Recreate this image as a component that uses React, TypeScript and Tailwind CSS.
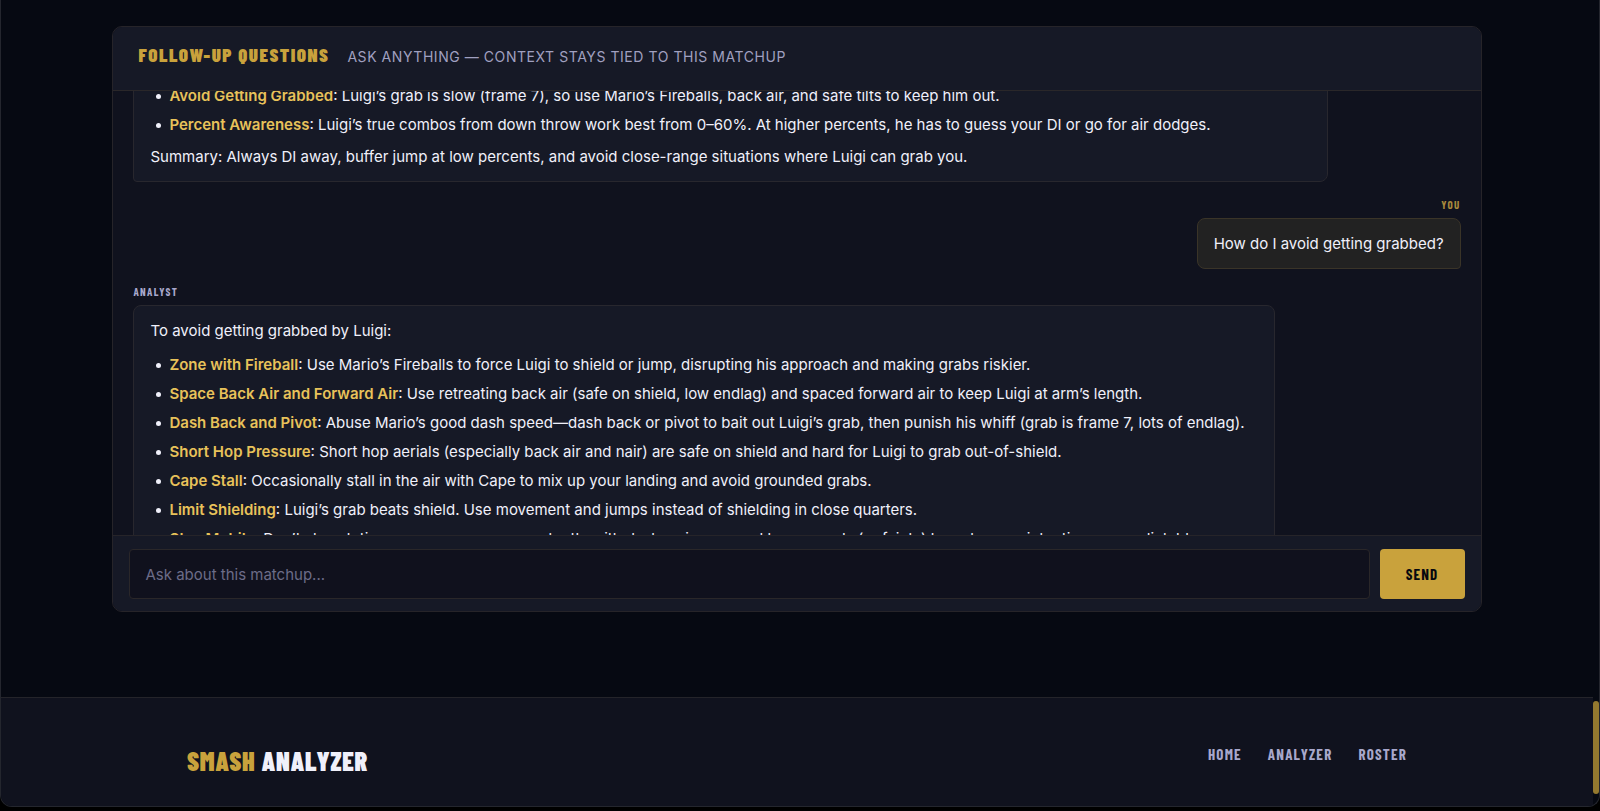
import React, { useLayoutEffect, useRef } from "react";

type Tip = { title: string; text: string };

const earlierTips: Tip[] = [
  { title: "Avoid Getting Grabbed", text: "Luigi’s grab is slow (frame 7), so use Mario’s Fireballs, back air, and safe tilts to keep him out." },
  { title: "Percent Awareness", text: "Luigi’s true combos from down throw work best from 0–60%. At higher percents, he has to guess your DI or go for air dodges." },
];

const grabTips: Tip[] = [
  { title: "Zone with Fireball", text: "Use Mario’s Fireballs to force Luigi to shield or jump, disrupting his approach and making grabs riskier." },
  { title: "Space Back Air and Forward Air", text: "Use retreating back air (safe on shield, low endlag) and spaced forward air to keep Luigi at arm’s length." },
  { title: "Dash Back and Pivot", text: "Abuse Mario’s good dash speed—dash back or pivot to bait out Luigi’s grab, then punish his whiff (grab is frame 7, lots of endlag)." },
  { title: "Short Hop Pressure", text: "Short hop aerials (especially back air and nair) are safe on shield and hard for Luigi to grab out-of-shield." },
  { title: "Cape Stall", text: "Occasionally stall in the air with Cape to mix up your landing and avoid grounded grabs." },
  { title: "Limit Shielding", text: "Luigi’s grab beats shield. Use movement and jumps instead of shielding in close quarters." },
  { title: "Stay Mobile", text: "Don’t stay static—vary your moves constantly with dashes, jumps, and turnarounds (or feints) to make your intentions unpredictable." },
];

const display = "font-['Barlow_Condensed','Roboto_Condensed','Liberation_Sans_Narrow','Liberation_Sans',sans-serif]";

function TipList({ tips }: { tips: Tip[] }) {
  return (
    <ul className="space-y-1 pl-[19px]">
      {tips.map((tip) => (
        <li
          key={tip.title}
          className="relative before:absolute before:top-[11px] before:-left-[13px] before:size-[5px] before:rounded-full before:bg-[#f0f0fa] before:content-['']"
        >
          <strong className="font-semibold text-[#e8c25a]">{tip.title}</strong>: {tip.text}
        </li>
      ))}
    </ul>
  );
}

function Label({ children, className }: { children: React.ReactNode; className: string }) {
  return (
    <div className={`${display} mt-4 mb-[6px] text-[11px] leading-[14px] font-bold tracking-[0.12em] uppercase ${className}`}>
      {children}
    </div>
  );
}

export default function App() {
  const log = useRef<HTMLDivElement>(null);
  useLayoutEffect(() => {
    if (log.current) log.current.scrollTop = 41;
  }, []);

  return (
    <div className="flex h-screen flex-col bg-black pb-1 font-['Inter','Liberation_Sans',sans-serif] text-[#f0f0fa]">
      <div className="relative flex flex-1 flex-col overflow-hidden rounded-b-xl border border-t-0 border-[#24262e] bg-[#060912]">
        <main className="flex-1 pt-[26px] pr-[6px]">
          <section className="mx-auto w-[86%] overflow-hidden rounded-[10px] border border-[#262429] bg-[#10121e]">
            <header className="flex h-[64px] items-baseline gap-[18px] border-b border-[#2a2729] bg-[#161926] px-[25px] pt-4">
              <h2 className={`${display} text-[19px] leading-6 font-black tracking-[0.08em] text-[#c9a23c] uppercase`}>Follow-up questions</h2>
              <p className="text-[14px] leading-5 tracking-[0.04em] text-[#a0a0c0] uppercase">Ask anything — context stays tied to this matchup</p>
            </header>

            <div ref={log} className="h-[444px] overflow-y-auto px-5 pt-5 pb-10 text-[15px] leading-[25px] [scrollbar-width:none]">
              <div className="w-[90%] rounded-lg rounded-bl-sm border border-[#28272e] bg-[#161926] px-4 py-3">
                <TipList tips={earlierTips} />
                <p className="mt-[7px]">Summary: Always DI away, buffer jump at low percents, and avoid close-range situations where Luigi can grab you.</p>
              </div>

              <Label className="text-right text-[#a98a3c]">You</Label>
              <div className="ml-auto w-fit rounded-lg rounded-br-sm border border-[#3a3428] bg-[#222222] px-4 py-3">
                How do I avoid getting grabbed?
              </div>

              <Label className="text-[#a8a8cc]">Analyst</Label>
              <div className="w-[86%] rounded-lg rounded-bl-sm border border-[#28272e] bg-[#161926] px-4 py-3">
                <p className="mb-[9px]">To avoid getting grabbed by Luigi:</p>
                <TipList tips={grabTips} />
              </div>
            </div>

            <form className="flex gap-[10px] border-t border-[#262429] bg-[#161926] px-4 pt-[13px] pb-3" onSubmit={(e) => e.preventDefault()}>
              <input
                type="text"
                aria-label="Ask about this matchup"
                placeholder="Ask about this matchup..."
                className="h-[50px] min-w-0 flex-1 rounded border border-[#2a2729] bg-[#10111d] px-[15px] text-[15px] outline-none placeholder:text-[#6c6c88]"
              />
              <button type="submit" className={`${display} w-[85px] rounded bg-[#c9a23c] text-[15px] font-bold tracking-[0.08em] text-[#07080f] uppercase`}>Send</button>
            </form>
          </section>
        </main>

        <footer className="mr-[6px] h-[109px] border-t border-[#24242a] bg-[#10121e]">
          <div className="mx-auto flex max-w-[1220px] items-start justify-between pt-11">
            <div className={`${display} pt-[5px] text-[26px] leading-7 font-black tracking-[0.03em] uppercase`}>
              <span className="text-[#c9a23c]">Smash</span> Analyzer
            </div>
            <nav className={`${display} flex gap-[26px] text-[15px] leading-6 font-bold tracking-[0.08em] text-[#a8a8cc] uppercase`}>
              <a href="#home">Home</a>
              <a href="#analyzer">Analyzer</a>
              <a href="#roster">Roster</a>
            </nav>
          </div>
        </footer>

        <div className="absolute right-0 bottom-3 h-[93px] w-[6px] rounded-full bg-[#94792f]" />
      </div>
    </div>
  );
}
